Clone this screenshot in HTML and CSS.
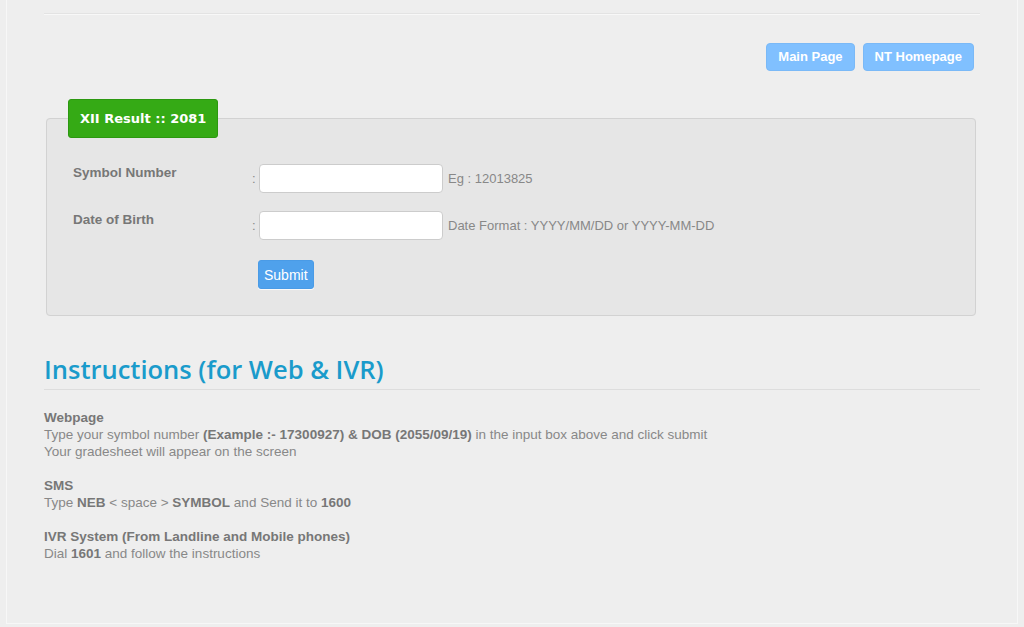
FILE: index.html
```html
<!DOCTYPE html>
<html lang="en">
<head>
  <meta charset="UTF-8">
  <title>XII Result :: 2081</title>
  <link rel="stylesheet" href="styles.css">
</head>
<body>
  <div class="wrapper">
    <div class="content">
      <hr class="top-rule">

      <div class="links">
        <a href="#" class="link-btn">Main Page</a>
        <a href="#" class="link-btn">NT Homepage</a>
      </div>

      <form class="result-form" onsubmit="return false;">
        <fieldset class="result-box">
          <legend class="result-title">XII Result :: 2081</legend>

          <div class="field-row">
            <label class="field-label" for="symbol">Symbol Number</label>
            <span class="colon">:</span>
            <input type="text" id="symbol" class="field-input">
            <span class="hint">Eg : 12013825</span>
          </div>

          <div class="field-row">
            <label class="field-label" for="dob">Date of Birth</label>
            <span class="colon">:</span>
            <input type="text" id="dob" class="field-input">
            <span class="hint">Date Format : YYYY/MM/DD or YYYY-MM-DD</span>
          </div>

          <div class="submit-row">
            <button type="submit" class="submit-btn">Submit</button>
          </div>
        </fieldset>
      </form>

      <h2 class="section-title">Instructions (for Web &amp; IVR)</h2>

      <div class="instructions">
        <p>
          <b>Webpage</b><br>
          Type your symbol number <b>(Example :- 17300927) &amp; DOB (2055/09/19)</b> in the input box above and click submit<br>
          Your gradesheet will appear on the screen
        </p>
        <p>
          <b>SMS</b><br>
          Type <b>NEB</b> &lt; space &gt; <b>SYMBOL</b> and Send it to <b>1600</b>
        </p>
        <p>
          <b>IVR System (From Landline and Mobile phones)</b><br>
          Dial <b>1601</b> and follow the instructions
        </p>
      </div>
    </div>
  </div>
</body>
</html>
```

FILE: styles.css
```css
* {
  margin: 0;
  padding: 0;
  box-sizing: border-box;
}

body {
  font-family: "Liberation Sans", Arial, sans-serif;
  font-size: 13px;
  background-color: #eeeeee;
  color: #888;
}

.wrapper {
  margin: 0 6px;
  height: 624px;
  border: 1px solid #f7f7f7;
  border-top: none;
}

.content {
  padding: 13px 37px 0;
}

.top-rule {
  border: none;
  border-top: 1px solid #e3e3e3;
  border-bottom: 1px solid #f8f8f8;
}

.links {
  display: flex;
  justify-content: flex-end;
  gap: 8px;
  margin: 28px 6px 0 0;
}

.link-btn {
  display: inline-block;
  height: 28px;
  line-height: 26px;
  padding: 0 11px;
  background-color: #80c0ff;
  border: 1px solid #7ab9f7;
  border-radius: 4px;
  color: white;
  font-weight: bold;
  text-decoration: none;
}

.result-form {
  margin: 28px 4px 0 2px;
}

.result-box {
  background-color: #e6e6e6;
  border: 1px solid #d2d2d2;
  border-radius: 4px;
  padding: 0 21px 26px;
}

.result-title {
  background-color: #35aa15;
  border: 1px solid #2c9810;
  border-radius: 3px;
  color: white;
  font-family: "DejaVu Sans", Verdana, sans-serif;
  font-size: 13px;
  font-weight: bold;
  height: 39px;
  line-height: 37px;
  padding: 0 11px;
}

.field-row {
  display: flex;
  align-items: center;
  margin-top: 26px;
  padding-left: 5px;
}

.field-row + .field-row {
  margin-top: 18px;
}

.field-label {
  width: 179px;
  align-self: flex-start;
  padding-top: 1px;
  font-size: 13.5px;
  font-weight: bold;
  color: #777;
}

.colon {
  width: 7px;
  color: #888;
}

.field-input {
  width: 184px;
  height: 29px;
  background: white;
  border: 1px solid #cccccc;
  border-radius: 4px;
  padding: 0 6px;
  font-size: 13px;
}

.hint {
  margin-left: 5px;
  color: #888;
}

.submit-row {
  margin: 20px 0 0 190px;
}

.submit-btn {
  height: 29px;
  padding: 0 5px;
  background-color: #4fa1ec;
  border: 1px solid #4a9be6;
  border-radius: 3px;
  box-shadow: 0 1px 0 #fafafa;
  color: white;
  font-family: "Liberation Sans", Arial, sans-serif;
  font-size: 14px;
  cursor: pointer;
}

.section-title {
  margin-top: 38px;
  padding-bottom: 5px;
  border-bottom: 1px solid #dddddd;
  font-family: "Open Sans", sans-serif;
  font-size: 25.5px;
  font-weight: 600;
  line-height: 30px;
  color: #1a9bcb;
}

.instructions {
  margin-top: 19px;
  font-size: 13.5px;
  line-height: 17px;
  color: #888;
}

.instructions p {
  margin-bottom: 17px;
}

.instructions b {
  color: #777;
}
```
